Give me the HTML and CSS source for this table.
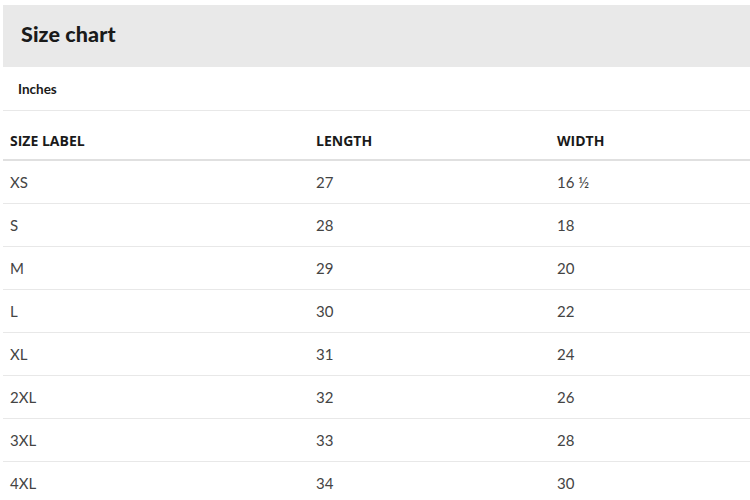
FILE: index.html
```html
<!DOCTYPE html>
<html>
<head>
<meta charset="utf-8">
<link rel="stylesheet" href="styles.css">
</head>
<body>
<div class="chart">
  <div class="title-bar"><h1 class="title">Size chart</h1></div>
  <div class="unit">Inches</div>
  <table class="table">
    <thead>
      <tr><th class="c1">SIZE LABEL</th><th class="c2">LENGTH</th><th class="c3">WIDTH</th></tr>
    </thead>
    <tbody>
      <tr><td>XS</td><td>27</td><td>16 ½</td></tr>
      <tr><td>S</td><td>28</td><td>18</td></tr>
      <tr><td>M</td><td>29</td><td>20</td></tr>
      <tr><td>L</td><td>30</td><td>22</td></tr>
      <tr><td>XL</td><td>31</td><td>24</td></tr>
      <tr><td>2XL</td><td>32</td><td>26</td></tr>
      <tr><td>3XL</td><td>33</td><td>28</td></tr>
      <tr><td>4XL</td><td>34</td><td>30</td></tr>
    </tbody>
  </table>
</div>
</body>
</html>
```
FILE: styles.css
```css
html, body {
  margin: 0;
  padding: 0;
  background: #fff;
}
.chart {
  padding: 5px 0 0 3px;
  font-family: Lato, "Open Sans", sans-serif;
}
.title-bar {
  background: #e9e9e9;
  height: 62px;
  box-sizing: border-box;
  display: flex;
  align-items: center;
  padding: 0 0 4px 18px;
}
.title {
  margin: 0;
  font-size: 21.5px;
  font-weight: 900;
  color: #1a1a1a;
  letter-spacing: 0.1px;
}
.unit {
  height: 43px;
  display: flex;
  align-items: center;
  padding-left: 15px;
  font-size: 13.5px;
  font-weight: 700;
  color: #1a1a1a;
  border-bottom: 1px solid #e8e8e8;
}
.table {
  width: 100%;
  border-collapse: collapse;
}
.table th {
  font-family: "Open Sans", sans-serif;
  font-weight: 700;
  font-size: 14px;
  color: #1a1a1a;
  text-align: left;
  height: 49px;
  box-sizing: border-box;
  padding: 10px 0 0 7px;
  border-bottom: 2px solid #e0e0e0;
}
.c1 { width: 306px; }
.c2 { width: 241px; }
.table td {
  font-size: 15px;
  color: #444;
  height: 42px;
  padding: 0 0 0 7px;
  border-bottom: 1px solid #e8e8e8;
}
```
